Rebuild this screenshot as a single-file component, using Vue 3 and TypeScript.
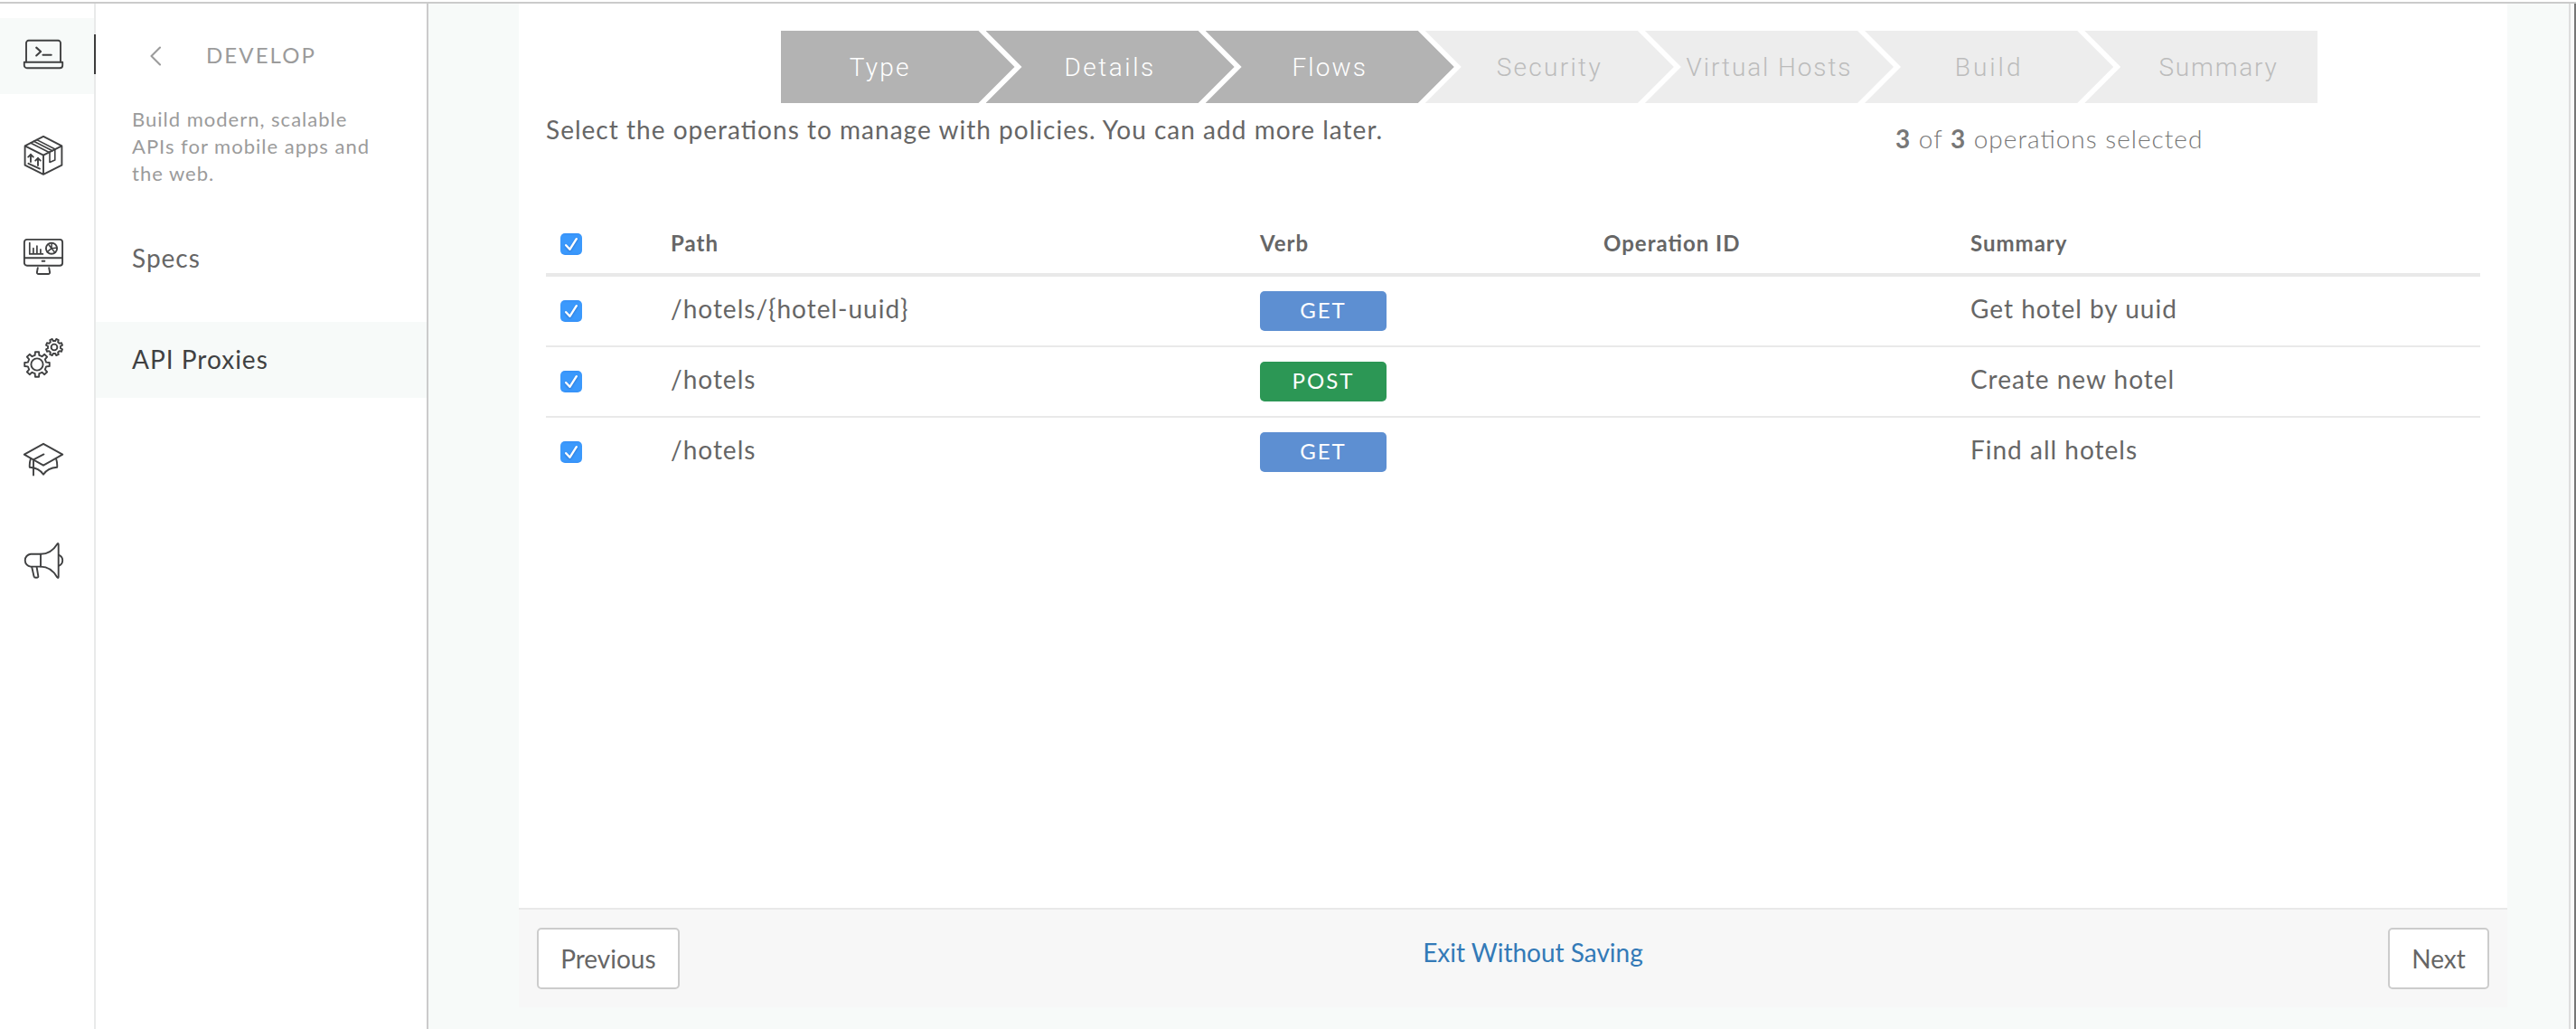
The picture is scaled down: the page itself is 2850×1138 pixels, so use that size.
<script setup lang="ts">
import { ref, computed } from 'vue'

interface Step { label: string; done: boolean; spacing: number }
interface Operation { path: string; verb: 'GET' | 'POST'; operationId: string; summary: string }

const steps: Step[] = [
  { label: 'Type', done: true, spacing: 2.2 },
  { label: 'Details', done: true, spacing: 2.5 },
  { label: 'Flows', done: true, spacing: 2.1 },
  { label: 'Security', done: false, spacing: 2.3 },
  { label: 'Virtual Hosts', done: false, spacing: 1.9 },
  { label: 'Build', done: false, spacing: 3 },
  { label: 'Summary', done: false, spacing: 1.8 },
]

const operations: Operation[] = [
  { path: '/hotels/{hotel-uuid}', verb: 'GET', operationId: '', summary: 'Get hotel by uuid' },
  { path: '/hotels', verb: 'POST', operationId: '', summary: 'Create new hotel' },
  { path: '/hotels', verb: 'GET', operationId: '', summary: 'Find all hotels' },
]

const selected = ref<boolean[]>(operations.map(() => true))
const selectedCount = computed(() => selected.value.filter(Boolean).length)
const allSelected = computed(() => selectedCount.value === operations.length)

function toggle(i: number) { selected.value[i] = !selected.value[i] }
function toggleAll() {
  const next = !allSelected.value
  selected.value = operations.map(() => next)
}

// Outline of an eight-toothed gear around (cx, cy).
function gear(cx: number, cy: number, outer: number, root: number, offset: number): string {
  const pts: string[] = []
  for (let i = 0; i < 8; i++) {
    const mid = offset + i * 45
    for (const [d, r] of [[-13, root], [-8.5, outer], [8.5, outer], [13, root]]) {
      const a = ((mid + d) * Math.PI) / 180
      pts.push(`${(cx + r * Math.cos(a)).toFixed(2)} ${(cy + r * Math.sin(a)).toFixed(2)}`)
    }
  }
  return `M${pts.join('L')}Z`
}
const largeGear = gear(15, 29, 13.9, 10.4, 0)
const smallGear = gear(34, 10, 9.3, 7.1, 22.5)

const icons: string[] = ['develop', 'publish', 'analyze', 'admin', 'learn', 'announce']
</script>

<template>
  <div class="app">
    <nav class="rail">
      <a v-for="(name, i) in icons" :key="name" class="rail-item" :class="{ active: i === 0 }">
        <svg class="icon" viewBox="0 0 44 44">
          <template v-if="name === 'develop'">
            <path d="M3 30.5V9.5a2.7 2.7 0 0 1 2.7-2.7h32.6A2.7 2.7 0 0 1 41 9.5v21" />
            <path d="M.8 30.8h42.4v3.4a3 3 0 0 1-3 3H3.8a3 3 0 0 1-3-3z" />
            <path d="M14.2 14.6l4.9 4.4-4.9 4.5M21.5 22.7h9.2" stroke-width="2.1" />
          </template>
          <template v-else-if="name === 'publish'">
            <path d="M22 .9l20.4 10.5v21.3L22 42.8 1.6 32.7V11.4zM1.6 11.4L22 21.7l20.4-10.3M22 21.7v21" />
            <path d="M8.2 8.2l20.6 10.6M11.4 6.2l20.6 10.6M14.8 4.6l20.2 10.4M29 18v11.5l5.8-2.6V15" stroke-width="1.6" />
            <path d="M8 29V20.8M5.2 23.6L8 20.8l2.8 2.8M16 33V24.8M13.2 27.6l2.8-2.8 2.8 2.8M5.4 30.8L18 36.6" />
          </template>
          <template v-else-if="name === 'analyze'">
            <rect x=".9" y="2.9" width="42.2" height="28.800" rx="3" />
            <path d="M1 23.2h42M20.6 26.8h2.8" />
            <path d="M6.8 6.6v12.3h14.6M10.9 18.5v-6M14.9 18.5V10M18.9 18.5v-4.6" stroke-width="1.7" />
            <circle cx="31" cy="12.7" r="6.1" />
            <path d="M31 12.7l.2-6M31 12.7l6-.6M31 12.7l-4.8 4M31 12.7L27.4 8M31 12.7l3.8 4.6" stroke-width="1.5" />
            <path d="M15.8 34.2l-.9 4.8q-.1 2 1.7 2h10.8q1.8 0 1.7-2l-.9-4.8" />
          </template>
          <template v-else-if="name === 'admin'">
            <path :d="largeGear" /><circle cx="15" cy="29" r="6.6" />
            <path :d="smallGear" /><circle cx="34" cy="10" r="3.4" />
          </template>
          <template v-else-if="name === 'learn'">
            <path d="M22 4.8l21.2 11.9L22 28.7.8 16.7z" />
            <path d="M22.4 16.4L11 22.4v17.2" />
            <path d="M8 21.4q-1.6 4-1.2 9.4Q17.4 31.6 22 38.8q4.6-7.2 15.2-8 .4-5.4-1.2-9.4" />
          </template>
          <template v-else>
            <path d="M19 14.7H7.9a7 7 0 0 0 0 13.9H19z" />
            <path d="M19 14.7c9 0 14.6-5 18.3-11q1.4-1.6 1.4.6V40q0 2-1.4.4C33.6 34 28 28.6 19 28.6" />
            <path d="M39.4 15.8q3.8 1.800 3.800 5.900t-3.800 5.900M9.2 29l2.300 10.300q.4 1.600 2 1.500h1.600q1.500-.1 1.200-1.700L14.600 29" />
          </template>
        </svg>
      </a>
    </nav>

    <aside class="panel">
      <header class="panel-head">
        <svg class="back" viewBox="0 0 12 22"><path d="M11 1.500L1.500 11 11 20.500" /></svg>
        <span class="panel-title">DEVELOP</span>
      </header>
      <p class="panel-desc">Build modern, scalable APIs for mobile apps and the web.</p>
      <a class="panel-link">Specs</a>
      <a class="panel-link current">API Proxies</a>
    </aside>

    <main class="main">
      <section class="card">
        <ol class="steps">
          <li v-for="s in steps" :key="s.label" class="step" :class="{ done: s.done }"
            :style="{ letterSpacing: s.spacing + 'px' }">{{ s.label }}</li>
        </ol>

        <div class="intro">
          <p class="hint">Select the operations to manage with policies. You can add more later.</p>
          <p class="count"><b>{{ selectedCount }}</b> of <b>{{ operations.length }}</b> operations selected</p>
        </div>

        <div class="table">
          <div class="row head">
            <button class="check" :class="{ on: allSelected }" @click="toggleAll">
              <svg v-if="allSelected" viewBox="0 0 24 24"><path d="M6.200 13.200l4.200 4.600 7.400-11.600" /></svg>
            </button>
            <span>Path</span><span>Verb</span><span>Operation ID</span><span>Summary</span>
          </div>
          <div v-for="(op, i) in operations" :key="i" class="row">
            <button class="check" :class="{ on: selected[i] }" @click="toggle(i)">
              <svg v-if="selected[i]" viewBox="0 0 24 24"><path d="M6.200 13.200l4.200 4.600 7.400-11.600" /></svg>
            </button>
            <span>{{ op.path }}</span>
            <span class="verb" :class="op.verb.toLowerCase()">{{ op.verb }}</span>
            <span>{{ op.operationId }}</span>
            <span>{{ op.summary }}</span>
          </div>
        </div>
      </section>

      <footer class="footer">
        <button class="btn">Previous</button>
        <a class="exit">Exit Without Saving</a>
        <button class="btn">Next</button>
      </footer>
    </main>
    <div class="gutter"></div>
  </div>
</template>

<style>
body { margin: 0; background: #fff; }
</style>

<style scoped>
.app {
  box-sizing: border-box; display: flex; width: 2850px; height: 1138px; padding-top: 4px; overflow: hidden;
  background: linear-gradient(#fff 2px, #cbcbcb 2px, #cbcbcb 4px, #fff 4px);
  color: #666; font-family: Lato, "Liberation Sans", sans-serif; font-size: 28px; font-weight: 400;
  letter-spacing: 1px; font-feature-settings: "liga" 1;
}
p, ol { margin: 0; padding: 0; }

.rail {
  flex: none; box-sizing: border-box; width: 106px; padding-top: 16px; border-right: 2px solid #e9eaea;
  display: flex; flex-direction: column; gap: 28px;
}
.rail-item { position: relative; box-sizing: border-box; height: 84px; padding: 18px 0 0 26px; }
.rail-item.active { background: #f7faf9; }
.rail-item.active::after {
  content: ""; position: absolute; top: 18px; right: -2px; width: 2px; height: 44px; background: #3c3c3c;
}
.icon { display: block; width: 44px; height: 44px; overflow: visible; }
.icon, .back, .check svg { fill: none; stroke-linecap: round; stroke-linejoin: round; }
.icon { stroke: #404142; stroke-width: 1.9; }

.panel { flex: none; box-sizing: border-box; width: 368px; border-right: 2px solid #cbcbcb; }
.panel-head { display: flex; align-items: center; height: 112px; padding-left: 60px; color: #9b9b9b; }
.back { width: 12px; height: 22px; stroke: #9b9b9b; stroke-width: 2.1; margin: 4px 50px 0 0; }
.panel-title { font-size: 24px; letter-spacing: 2.1px; }
.panel-desc {
  box-sizing: border-box; height: 128px; padding: 1px 60px 0 40px;
  color: #9b9b9b; font-size: 22px; line-height: 30px;
}
.panel-link {
  box-sizing: border-box; display: block; height: 84px; margin-bottom: 28px; padding-left: 40px;
  line-height: 82px;
}
.panel-link.current { background: #f7faf9; color: #404142; }

.main { flex: none; box-sizing: border-box; width: 2368px; padding: 0 68px 0 100px; background: #f7faf9; }
.card { box-sizing: border-box; height: 1002px; padding: 30px 30px 0; border-bottom: 2px solid #e9e9e9; background: #fff; }

.steps { display: flex; width: 1700px; margin-left: 260px; list-style: none; }
.step {
  flex: none; box-sizing: border-box; width: 275.15px; height: 80px; margin-right: -32px;
  background: #ededed; color: #bcbcbc; text-align: center;
  font: 300 28px/82px Roboto, "Liberation Sans", sans-serif;
  clip-path: polygon(0 0, calc(100% - 40px) 0, 100% 50%, calc(100% - 40px) 100%, 0 100%, 40px 50%);
}
.step.done { background: #b3b3b3; color: #fff; }
.step:first-child {
  width: 258.5px; padding-right: 39px;
  clip-path: polygon(0 0, calc(100% - 40px) 0, 100% 50%, calc(100% - 40px) 100%, 0 100%);
}
.step:last-child {
  width: 257.75px; margin-right: 0; padding-left: 39px;
  clip-path: polygon(0 0, 100% 0, 100% 100%, 0 100%, 40px 50%);
}

.intro { display: flex; height: 126px; padding-top: 9px; line-height: 40px; }
.hint { width: 1493px; letter-spacing: 1.02px; }
.count { padding-top: 10px; color: #777; font-weight: 300; }
.count b { font-weight: 700; }

.row {
  box-sizing: border-box; display: grid; grid-template-columns: 138px 652px 380px 406px 1fr;
  height: 78px; padding-top: 16px; border-bottom: 2px solid #e9e9e9; line-height: 38px;
}
.row:last-child { border-bottom: 0; }
.row.head {
  height: 57px; padding-top: 0; border-bottom-width: 4px; font-size: 24px; font-weight: 700; line-height: 40px;
}
.check {
  width: 24px; height: 24px; margin: 10px 0 0 16px; padding: 0; border: 1px solid #bbb; border-radius: 5px; background: #fff;
}
.row.head .check { margin-top: 9px; }
.check.on { border: 0; background: linear-gradient(#3590f7, #3b99fc 3px, #3b99fc 21px, #3590f7); }
.check svg { display: block; width: 24px; height: 24px; stroke: #fff; stroke-width: 2.4; filter: drop-shadow(0 1px 1px rgba(0, 40, 120, .35)); }
.verb {
  width: 140px; height: 44px; border-radius: 5px; color: #fff; text-align: center;
  font-size: 24px; line-height: 42px; letter-spacing: 2px;
}
.verb.get { background: #5d8fd2; }
.verb.post { background: #2c9755; }

.footer {
  box-sizing: border-box; display: flex; justify-content: space-between; align-items: flex-start;
  height: 108px; padding: 20px 20px 0; background: #f7f7f7; letter-spacing: 0;
}
.btn {
  box-sizing: border-box; height: 68px; padding: 0 24.2px; border: 2px solid #ccc; border-radius: 5px;
  background: #fff; color: #666; font: inherit; line-height: 62px;
}
.exit { margin-left: -2px; color: #337ab7; line-height: 54px; }
.gutter { flex: 1; box-sizing: border-box; border-left: 2px solid #dedede; border-right: 2px solid #777; background: #fafafa; }
</style>
